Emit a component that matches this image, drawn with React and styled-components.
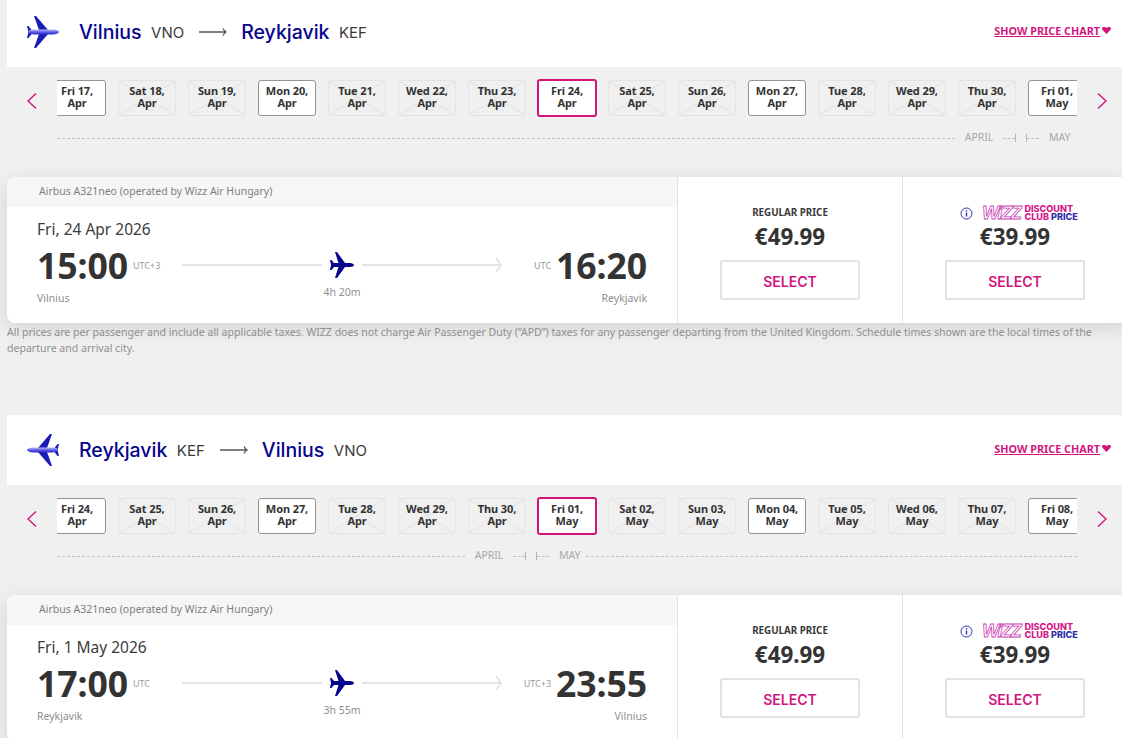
import React from "react";
import styled, { createGlobalStyle } from "styled-components";

const PINK = "#d1157f";
const NAVY = "#06038d";
const BODY = '"Noto Sans", "Liberation Sans", sans-serif';
const HEAD = 'Inter, "Liberation Sans", sans-serif';

const Global = createGlobalStyle`
  html, body { margin: 0; padding: 0; background: #f0f0f0; overflow: hidden; }
  * { box-sizing: border-box; }
`;

const Page = styled.div`
  width: 1122px;
  height: 738px;
  overflow: hidden;
  padding-left: 7px;
  font-family: ${BODY};
  color: #333;
`;

const Scrolled = styled.div`
  margin-top: -3px;
  width: 1121px;
`;

const Section = styled.section`
  height: 418px;
`;

const Header = styled.header`
  height: 70px;
  background: #fff;
  display: flex;
  align-items: center;
  padding: 0 17px 0 20px;
`;

const Route = styled.div`
  display: flex;
  align-items: center;
  flex: 1;
`;

const Logo = styled.svg`
  width: 32px;
  height: 32px;
  margin-right: 20px;
  transform: ${(p) => (p.$flip ? "scaleX(-1)" : "none")};
`;

const City = styled.span`
  font-family: ${HEAD};
  font-size: 19.5px;
  font-weight: 500;
  color: ${NAVY};
`;

const Code = styled.span`
  font-family: ${HEAD};
  font-size: 15px;
  color: #3a3a3a;
  margin-left: 9.5px;
`;

const RouteArrow = styled.svg`
  width: 28px;
  height: 10px;
  margin: 0 14px 0 15px;
`;

const ChartLink = styled.a`
  font-size: 10.8px;
  font-weight: 700;
  color: ${PINK};
  text-decoration: underline;
  display: flex;
  align-items: center;
  gap: 2px;
  margin-bottom: 4px;
`;

const Strip = styled.div`
  display: flex;
  align-items: center;
  height: 36px;
  margin-top: 13px;
`;

const Chevron = styled.svg`
  width: 50px;
  height: 18px;
  flex: none;
  margin-top: 6px;
`;

const DateWindow = styled.div`
  width: 1020px;
  height: 38px;
  overflow: hidden;
  display: flex;
  align-items: center;
`;

const DateTrack = styled.div`
  display: flex;
  align-items: center;
  gap: 12px;
  margin-left: -9px;
`;

const cross = `
  linear-gradient(to top right, transparent calc(50% - 1px), #e3e3e3 50%, transparent calc(50% + 1px)),
  linear-gradient(to bottom right, transparent calc(50% - 1px), #e3e3e3 50%, transparent calc(50% + 1px))
`;

const DateCard = styled.div`
  flex: none;
  width: ${(p) => (p.$state === "selected" ? "60px" : "58px")};
  height: ${(p) => (p.$state === "selected" ? "38px" : "36px")};
  margin: 0 ${(p) => (p.$state === "selected" ? "-1px" : "0")};
  border-radius: 3px;
  border: ${(p) =>
    p.$state === "selected"
      ? `2px solid ${PINK}`
      : p.$state === "open"
      ? "1px solid #949494"
      : "1px solid #e3e3e3"};
  background: ${(p) => (p.$state === "off" ? cross : "#fff")};
  font-size: 11px;
  font-weight: 700;
  line-height: 12px;
  letter-spacing: -0.1px;
  text-align: center;
  display: flex;
  align-items: center;
  justify-content: center;
  white-space: pre-line;
  padding-bottom: 2px;
  color: #333;
`;

const MonthRule = styled.div`
  display: flex;
  align-items: center;
  width: 1020px;
  height: 14px;
  margin: 15px 0 0 50px;
  font-size: 10.5px;
  color: #a8a8a8;
`;

const Dash = styled.i`
  display: block;
  height: 0;
  flex: ${(p) => (p.$w ? `0 0 ${p.$w}px` : "1")};
  border-top: 1px dashed ${(p) => (p.$clear ? "transparent" : "#c2c2c2")};
`;

const Tick = styled.i`
  display: block;
  width: 1px;
  height: 8px;
  background: #b4b4b4;
`;

const MonthLabel = styled.span`
  margin: 0 9px;
  width: 30px;
  text-align: center;
  white-space: nowrap;
  position: relative;
  top: -1px;
`;

const MayLabel = styled(MonthLabel)`
  width: 20px;
  margin: 0 7px 0 10px;
`;

const TickGap = styled.i`
  display: block;
  flex: 0 0 10px;
`;

const Card = styled.article`
  margin-top: 32px;
  height: 146px;
  width: 1121px;
  display: flex;
  background: #fff;
  border-radius: 8px;
  box-shadow: 0 5px 20px rgba(0, 0, 0, 0.13);
  overflow: hidden;
`;

const FlightPanel = styled.div`
  flex: 0 0 671px;
  border-right: 1px solid #e2e2e2;
`;

const Aircraft = styled.div`
  height: 30px;
  background: #f6f6f6;
  padding-left: 32px;
  font-size: 10.5px;
  line-height: 28px;
  color: #7f7f7f;
`;

const FlightBody = styled.div`
  padding: 11px 30px 0;
`;

const DateText = styled.div`
  font-size: 15.5px;
  line-height: 22px;
  color: #3c3c3c;
`;

const Grid = styled.div`
  display: grid;
  grid-template-columns: 145px 1fr 145px;
  margin-top: 5px;
`;

const Stop = styled.div`
  display: flex;
  flex-direction: column;
  align-items: ${(p) => (p.$end ? "flex-end" : "flex-start")};
`;

const TimeRow = styled.div`
  display: flex;
  align-items: center;
  gap: 5px;
  height: 40px;
`;

const Time = styled.span`
  font-size: 35.6px;
  font-weight: 700;
  letter-spacing: -0.1px;
  color: #333;
`;

const Zone = styled.span`
  font-size: 9px;
  color: #999;
`;

const Place = styled.span`
  font-size: 10.5px;
  color: #8f8f8f;
  margin-top: 5px;
  line-height: 16px;
`;

const Track = styled.div`
  display: flex;
  flex-direction: column;
  align-items: stretch;
`;

const TrackLine = styled.div`
  display: flex;
  align-items: center;
  height: 40px;
  gap: 8px;
`;

const Rail = styled.i`
  display: block;
  height: 2px;
  flex: ${(p) => (p.$w ? `0 0 ${p.$w}px` : "1")};
  background: #e4e4e4;
`;

const Head = styled.svg`
  width: 7px;
  height: 16px;
  margin-left: -14px;
  flex: none;
`;

const Duration = styled.span`
  width: 320px;
  text-align: center;
  font-size: 10.5px;
  color: #8f8f8f;
  line-height: 14px;
`;

const PricePanel = styled.div`
  flex: 0 0 ${(p) => (p.$last ? "224px" : "225px")};
  display: flex;
  flex-direction: column;
  align-items: center;
  padding-top: 28px;
  border-right: ${(p) => (p.$last ? "none" : "1px solid #e2e2e2")};
`;

const PriceLabel = styled.div`
  height: 16px;
  font-size: 9.8px;
  font-weight: 700;
  line-height: 16px;
  color: #3a3a3a;
  display: flex;
  align-items: center;
  gap: 9px;
`;

const ClubLabel = styled(PriceLabel)`
  margin-left: 8px;
`;

const Club = styled.div`
  display: flex;
  align-items: center;
  gap: 1px;
`;

const WizzMark = styled.span`
  font-family: "Liberation Sans", sans-serif;
  font-style: italic;
  font-weight: 700;
  font-size: 18px;
  line-height: 16px;
  letter-spacing: -1.4px;
  padding-right: 3px;
  color: #fff;
  -webkit-text-stroke: 0.8px #c93fb4;
`;

const ClubText = styled.div`
  font-family: ${HEAD};
  font-size: 9.1px;
  font-weight: 800;
  line-height: 8.5px;
  color: #d6188c;
`;

const ClubPrice = styled.span`
  color: #2f2fa8;
`;

const Price = styled.div`
  font-size: 22.4px;
  font-weight: 700;
  line-height: 30px;
  margin-top: 1px;
  color: #333;
`;

const SelectButton = styled.button`
  width: 140px;
  height: 40px;
  margin-top: 8px;
  padding: 3px 0 0;
  border: 2px solid #e2e2e2;
  border-radius: 3px;
  background: #fff;
  font-family: ${HEAD};
  font-size: 14px;
  font-weight: 600;
  color: ${PINK};
`;

const Note = styled.p`
  margin: 1px 0 0;
  width: 1100px;
  font-size: 10.56px;
  line-height: 16px;
  color: #8f8f8f;
`;

const BigPlane = ({ flip, id }) => (
  <Logo viewBox="0 0 32 32" $flip={flip}>
    <defs>
      <linearGradient id={id} x1="0" x2="0" y1="0" y2="1">
        <stop offset="0" stopColor="#b9b9f5" />
        <stop offset="0.5" stopColor="#5d5de6" />
        <stop offset="1" stopColor="#2a2ac8" />
      </linearGradient>
    </defs>
    <path d="M7 0h2L21 14h-9z" fill="#1a1ab8" />
    <path d="M7 32h2L21 18h-9z" fill="#1a1ab8" />
    <path d="M0 10l1.500 0L5 14.500V17.500L1.500 22 0 22l1.500-6z" fill="#1a1ab8" />
    <path d="M1 16c0-1.600 3-2.400 6-2.400h19c3 0 6 1.400 6 2.400s-3 2.400-6 2.400H7c-3 0-6-.8-6-2.400z" fill={`url(#${id})`} />
  </Logo>
);

const SmallPlane = () => (
  <svg width="24" height="26" viewBox="0 0 24 26" fill={NAVY} style={{ flex: "none" }}>
    <path d="M24 13c0-1-2-2-4-2h-5L7 0H5l3.500 11H4L1.500 8H0l1 5-1 5h1.500L4 15h4.500L5 26h2l8-11h5c2 0 4-1 4-2z" />
  </svg>
);

const Heart = () => (
  <svg width="9" height="7" viewBox="0 0 9 7" fill={PINK}>
    <path d="M0 1.500C0 .5 1 0 2 0s2 .5 2.500 1C5 .5 6 0 7 0s2 .5 2 1.500c0 1-1 2-4.500 5.500C1 3.500 0 2.500 0 1.500z" />
  </svg>
);

const Info = () => (
  <svg width="13" height="13" viewBox="0 0 13 13" fill="none" stroke="#2f2fa8">
    <circle cx="6.500" cy="6.500" r="5.500" />
    <path d="M6.500 5.600v4M6.500 3.200v1.200" strokeWidth="1.400" />
  </svg>
);

const sections = [
  {
    from: "Vilnius", fromCode: "VNO", to: "Reykjavik", toCode: "KEF", flip: false,
    days: ["Fri 17,\nApr", "Sat 18,\nApr", "Sun 19,\nApr", "Mon 20,\nApr", "Tue 21,\nApr", "Wed 22,\nApr", "Thu 23,\nApr", "Fri 24,\nApr", "Sat 25,\nApr", "Sun 26,\nApr", "Mon 27,\nApr", "Tue 28,\nApr", "Wed 29,\nApr", "Thu 30,\nApr", "Fri 01,\nMay"],
    ruleAfter: false,
    date: "Fri, 24 Apr 2026", dep: "15:00", depZone: "UTC+3", arr: "16:20", arrZone: "UTC", duration: "4h 20m",
    note: true,
  },
  {
    from: "Reykjavik", fromCode: "KEF", to: "Vilnius", toCode: "VNO", flip: true,
    days: ["Fri 24,\nApr", "Sat 25,\nApr", "Sun 26,\nApr", "Mon 27,\nApr", "Tue 28,\nApr", "Wed 29,\nApr", "Thu 30,\nApr", "Fri 01,\nMay", "Sat 02,\nMay", "Sun 03,\nMay", "Mon 04,\nMay", "Tue 05,\nMay", "Wed 06,\nMay", "Thu 07,\nMay", "Fri 08,\nMay"],
    ruleAfter: true,
    date: "Fri, 1 May 2026", dep: "17:00", depZone: "UTC", arr: "23:55", arrZone: "UTC+3", duration: "3h 55m",
    note: false,
  },
];

const openDays = [0, 3, 10, 14];

const stateOf = (i) => (i === 7 ? "selected" : openDays.includes(i) ? "open" : "off");

const FlightSection = ({ s, idx }) => (
  <Section>
    <Header>
      <Route>
        <BigPlane flip={s.flip} id={`plane-${idx}`} />
        <City>{s.from}</City>
        <Code>{s.fromCode}</Code>
        <RouteArrow viewBox="0 0 28 10" fill="none" stroke="#555">
          <path d="M0 5h27M24 1.500c1 2 2 3 3 3.500-1 .5-2 1.500-3 3.500" strokeWidth="1.300" />
        </RouteArrow>
        <City>{s.to}</City>
        <Code>{s.toCode}</Code>
      </Route>
      <ChartLink>
        SHOW PRICE CHART <Heart />
      </ChartLink>
    </Header>

    <Strip>
      <Chevron viewBox="0 0 50 18" fill="none" stroke={PINK} strokeWidth="1.400">
        <path d="M29 1.500l-8 7.500 8 7.500" />
      </Chevron>
      <DateWindow>
        <DateTrack>
          {s.days.map((d, i) => (
            <DateCard key={d} $state={stateOf(i)}>{d}</DateCard>
          ))}
        </DateTrack>
      </DateWindow>
      <Chevron viewBox="0 0 50 18" fill="none" stroke={PINK} strokeWidth="1.400">
        <path d="M21 1.500l8 7.500-8 7.500" />
      </Chevron>
    </Strip>

    <MonthRule>
      {s.ruleAfter ? <Dash $w={408} /> : <Dash />}
      <MonthLabel>APRIL</MonthLabel>
      <Dash $w={12} />
      <Tick />
      <TickGap />
      <Tick />
      <Dash $w={12} />
      <MayLabel>MAY</MayLabel>
      {s.ruleAfter ? <Dash /> : <Dash $w={1} $clear />}
    </MonthRule>

    <Card>
      <FlightPanel>
        <Aircraft>Airbus A321neo (operated by Wizz Air Hungary)</Aircraft>
        <FlightBody>
          <DateText>{s.date}</DateText>
          <Grid>
            <Stop>
              <TimeRow>
                <Time>{s.dep}</Time>
                <Zone>{s.depZone}</Zone>
              </TimeRow>
              <Place>{s.from}</Place>
            </Stop>
            <Track>
              <TrackLine>
                <Rail $w={140} />
                <SmallPlane />
                <Rail />
                <Head viewBox="0 0 7 16" fill="none" stroke="#e0e0e0" strokeWidth="1.400">
                  <path d="M1 1l5 7-5 7" />
                </Head>
              </TrackLine>
              <Duration>{s.duration}</Duration>
            </Track>
            <Stop $end>
              <TimeRow>
                <Zone>{s.arrZone}</Zone>
                <Time>{s.arr}</Time>
              </TimeRow>
              <Place>{s.to}</Place>
            </Stop>
          </Grid>
        </FlightBody>
      </FlightPanel>

      <PricePanel>
        <PriceLabel>REGULAR PRICE</PriceLabel>
        <Price>€49.99</Price>
        <SelectButton>SELECT</SelectButton>
      </PricePanel>

      <PricePanel $last>
        <ClubLabel>
          <Info />
          <Club>
            <WizzMark>WiZZ</WizzMark>
            <ClubText>
              DISCOUNT
              <br />
              CLUB <ClubPrice>PRICE</ClubPrice>
            </ClubText>
          </Club>
        </ClubLabel>
        <Price>€39.99</Price>
        <SelectButton>SELECT</SelectButton>
      </PricePanel>
    </Card>

    {s.note && (
      <Note>
        All prices are per passenger and include all applicable taxes. WIZZ does not charge Air Passenger Duty (“APD”) taxes for any passenger departing from the United Kingdom. Schedule times shown are the local times of the departure and arrival city.
      </Note>
    )}
  </Section>
);

export default function App() {
  return (
    <Page>
      <Global />
      <Scrolled>
        {sections.map((s, i) => (
          <FlightSection key={s.from} s={s} idx={i} />
        ))}
      </Scrolled>
    </Page>
  );
}
